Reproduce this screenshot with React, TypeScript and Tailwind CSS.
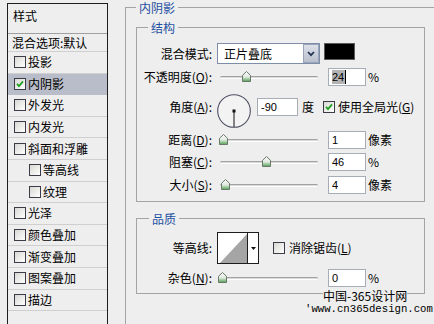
import React from 'react'

const cjk = "font-['Noto_Sans_CJK_SC','Noto_Sans',sans-serif]"
const num = "font-['Liberation_Sans','Noto_Sans',sans-serif]"

type Effect = { label: string; checked?: boolean; active?: boolean; sub?: boolean }

const effects: Effect[] = [
  { label: '投影' },
  { label: '内阴影', checked: true, active: true },
  { label: '外发光' },
  { label: '内发光' },
  { label: '斜面和浮雕' },
  { label: '等高线', sub: true },
  { label: '纹理', sub: true },
  { label: '光泽' },
  { label: '颜色叠加' },
  { label: '渐变叠加' },
  { label: '图案叠加' },
  { label: '描边' },
]

const Checkbox = ({ checked = false }: { checked?: boolean }) => (
  <span className="flex size-[12px] shrink-0 items-center justify-center border border-[#3c3c48] bg-linear-to-br from-[#d8d8d2] to-white">
    {checked && (
      <svg width="8" height="8" viewBox="0 0 8 8">
        <path d="M1 3.8 L3 6.2 L7 1.4" fill="none" stroke="#22a022" strokeWidth="1.8" />
      </svg>
    )}
  </span>
)

const Thumb = () => (
  <svg width="9" height="11" viewBox="0 0 9 11">
    <defs>
      <linearGradient id="thumb" x1="0" y1="0" x2="0" y2="1">
        <stop offset="0" stopColor="#fbfbfb" />
        <stop offset="0.55" stopColor="#dfe9df" />
        <stop offset="1" stopColor="#4f9f4f" />
      </linearGradient>
    </defs>
    <path d="M4.5 0.5 L8.5 4.3 L8.5 10.5 L0.5 10.5 L0.5 4.3 Z" fill="url(#thumb)" stroke="#6a786a" />
  </svg>
)

const Slider = ({ at }: { at: number }) => (
  <div className="relative ml-[5px] h-[18px] w-[98px] shrink-0">
    <div className="absolute inset-x-0 top-[8px] h-[3px] rounded-full border-y border-t-[#a2a2a2] border-b-white bg-[#d9d9d9]" />
    <div className="absolute top-[3px] flex" style={{ left: at - 4.5 }}>
      <Thumb />
    </div>
  </div>
)

const Field = ({ children, className = '' }: { children: React.ReactNode; className?: string }) => (
  <div className={`flex h-[18px] shrink-0 items-center border border-[#a7adb6] bg-white pl-[3px] text-[11px] ${num} ${className}`}>
    {children}
  </div>
)

const Label = ({ children }: { children: React.ReactNode }) => (
  <div className="w-[78px] shrink-0 pr-[3px] text-right leading-[14px]">{children}</div>
)

const SliderRow = ({ label, at, value, unit, className = '' }: { label: React.ReactNode; at: number; value: string; unit: string; className?: string }) => (
  <div className={`flex h-[18px] items-center ${className}`}>
    <Label>{label}</Label>
    <Slider at={at} />
    <Field className="ml-[10px] w-[38px]">{value}</Field>
    <span className="ml-[2px] leading-[14px]">{unit}</span>
  </div>
)

const Sidebar = () => (
  <div className="mt-[3px] ml-[7px] w-[101px] shrink-0 border-x border-t border-[#1e1e1e]">
    <div className="flex h-[30px] items-center border-b border-[#a0a0a0] pb-[5px] pl-[5px]">样式</div>
    <div className="flex h-[18px] items-center border-b border-[#cfcfcf] pl-[4px]">混合选项:默认</div>
    {effects.map((e) => (
      <div
        key={e.label}
        className={`flex h-[21.6px] items-center border-b ${e.active ? 'border-[#b9bdc9] bg-[#b9bdc9]' : 'border-[#cfcfcf]'} ${e.sub ? 'pl-[21px]' : 'pl-[6px]'}`}
      >
        <Checkbox checked={e.checked} />
        <span className="ml-[2px]">{e.label}</span>
      </div>
    ))}
  </div>
)

const AngleDial = () => (
  <svg width="34" height="34" viewBox="0 0 34 34" className="ml-[2px] shrink-0">
    <circle cx="17" cy="17" r="16.3" fill="#f3f3f3" stroke="#4e5064" strokeWidth="1.1" />
    <line x1="17" y1="17" x2="17" y2="33" stroke="#111" strokeWidth="1" />
    <rect x="15.5" y="15.5" width="3" height="3" fill="#111" />
  </svg>
)

export default function App() {
  return (
    <div className={`relative flex h-[324px] w-[434px] overflow-hidden bg-[#eeeeee] text-[12px] leading-none text-black ${cjk}`}>
      <Sidebar />

      <div className="ml-[17px] w-[330px] shrink-0">
        <fieldset className="h-[340px] min-w-0 border border-[#a4a4a4]">
          <legend className="ml-[10px] h-[15px] px-[3px] leading-[15px] text-[#1e50a2]">内阴影</legend>

          <fieldset className="mt-[5px] ml-[10px] h-[182px] w-[289px] min-w-0 border border-[#a4a4a4]">
            <legend className="ml-[11px] h-[15px] px-[3px] leading-[15px] text-[#1e50a2]">结构</legend>

            <div className="mt-[8px] flex h-[21px] items-center">
              <Label>混合模式:</Label>
              <div className="ml-[2px] flex h-[21px] w-[103px] shrink-0 border border-[#7f8ea8] bg-white">
                <div className="flex flex-1 items-center pl-[6px] leading-[14px]">正片叠底</div>
                <div className="flex w-[16px] items-center justify-center border border-[#9aa4b8] bg-linear-to-b from-[#dde1ea] to-[#b9bfcc]">
                  <svg width="8" height="6" viewBox="0 0 8 6">
                    <path d="M1 1 L4 4.2 L7 1" fill="none" stroke="#243452" strokeWidth="1.8" />
                  </svg>
                </div>
              </div>
              <div className="ml-[4px] h-[17px] w-[31px] shrink-0 self-start border border-[#5a5a5a] bg-black" />
            </div>

            <div className="mt-[4px] flex h-[18px] items-center">
              <Label>
                不透明度(<u>O</u>):
              </Label>
              <Slider at={26} />
              <Field className="ml-[10px] w-[38px]">
                <span className="border-r border-black bg-[#b2b2b2] pr-[1px] leading-[14px]">24</span>
              </Field>
              <span className="ml-[2px] leading-[14px]">%</span>
            </div>

            <div className="mt-[8px] flex h-[34px] items-start">
              <div className="mt-[4px] flex h-[18px] items-center">
                <Label>
                  角度(<u>A</u>):
                </Label>
              </div>
              <AngleDial />
              <Field className="mt-[4px] ml-[6px] w-[41px]">-90</Field>
              <span className="mt-[4px] ml-[4px] flex h-[18px] items-center">度</span>
              <span className="mt-[7px] ml-[9px] flex">
                <Checkbox checked />
              </span>
              <span className="mt-[4px] ml-[3px] flex h-[18px] items-center">
                使用全局光(<u>G</u>)
              </span>
            </div>

            <SliderRow className="mt-[3px]" label={<>距离(<u>D</u>):</>} at={3} value="1" unit="像素" />
            <SliderRow className="mt-[4px]" label={<>阻塞(<u>C</u>):</>} at={46} value="46" unit="%" />
            <SliderRow className="mt-[5px]" label={<>大小(<u>S</u>):</>} at={5.5} value="4" unit="像素" />
          </fieldset>

          <fieldset className="mt-[9px] ml-[10px] h-[83px] w-[289px] min-w-0 border border-[#a4a4a4]">
            <legend className="ml-[12px] h-[15px] px-[3px] leading-[15px] text-[#1e50a2]">品质</legend>

            <div className="mt-[6px] flex h-[32px] items-center">
              <Label>等高线:</Label>
              <div className="ml-[2px] flex h-[32px] w-[42px] shrink-0 border border-[#1c1c1c] bg-white">
                <div className="h-full w-[30px] border-r border-[#1c1c1c]">
                  <svg width="29" height="30" viewBox="0 0 29 30">
                    <polygon points="2,30 29,1 29,30" fill="#a5a5a5" />
                  </svg>
                </div>
                <div className="flex flex-1 items-center justify-center">
                  <svg width="5" height="3" viewBox="0 0 5 3">
                    <polygon points="0,0 5,0 2.5,3" fill="#111" />
                  </svg>
                </div>
              </div>
              <span className="ml-[14px] flex">
                <Checkbox />
              </span>
              <span className="ml-[4px] leading-[14px]">
                消除锯齿(<u>L</u>)
              </span>
            </div>

            <SliderRow className="mt-[5px]" label={<>杂色(<u>N</u>):</>} at={2} value="0" unit="%" />
          </fieldset>
        </fieldset>
      </div>

      <div className="absolute top-[290px] left-[323px] bg-[#eeeeee] leading-[12px]">中国-365设计网</div>
      <div className="absolute top-[304px] left-[305px] font-['Liberation_Mono',monospace] text-[10.67px] leading-[10px]">
        'www.cn365design.com
      </div>
    </div>
  )
}
